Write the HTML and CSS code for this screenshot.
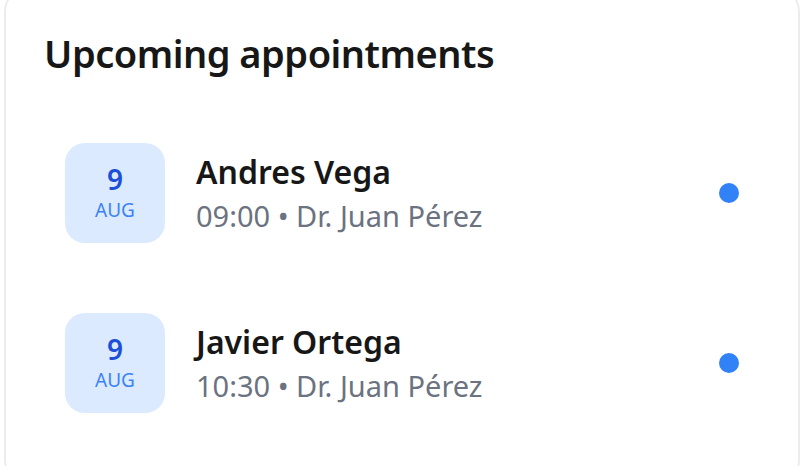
FILE: index.html
```html
<!DOCTYPE html>
<html lang="en">
<head>
    <meta charset="UTF-8">
    <meta name="viewport" content="width=device-width, initial-scale=1.0">
    <title>Upcoming appointments</title>
    <link rel="stylesheet" href="styles.css">
</head>
<body>

    <!-- tarjeta de próximas citas -->
    <div class="card">
        <h2 class="card-title">Upcoming appointments</h2>

        <ul class="appointments">
            <li class="appointment">
                <div class="date-box">
                    <span class="date-day">9</span>
                    <span class="date-month">AUG</span>
                </div>
                <div class="appointment-info">
                    <div class="patient-name">Andres Vega</div>
                    <div class="appointment-meta">09:00 • Dr. Juan Pérez</div>
                </div>
                <span class="status-dot"></span>
            </li>
            <li class="appointment">
                <div class="date-box">
                    <span class="date-day">9</span>
                    <span class="date-month">AUG</span>
                </div>
                <div class="appointment-info">
                    <div class="patient-name">Javier Ortega</div>
                    <div class="appointment-meta">10:30 • Dr. Juan Pérez</div>
                </div>
                <span class="status-dot"></span>
            </li>
        </ul>
    </div>

</body>
</html>
```

FILE: styles.css
```css
body {
    font-family: "Noto Sans", "Open Sans", sans-serif;
    margin: 0;
    padding: 0;
    background-color: #fff;
    overflow: hidden;
}
.card {
    box-sizing: border-box;
    width: 796px;
    height: 500px;
    margin: -14px 0 0 4px;
    padding: 41px 38px 0;
    background-color: #fff;
    border: 2px solid #ececee;
    border-radius: 26px;
}
.card-title {
    margin: 0;
    font-size: 38px;
    font-weight: 600;
    line-height: 48px;
    letter-spacing: -0.5px;
    color: #171717;
}
.appointments {
    list-style-type: none;
    margin: 66px 0 0;
    padding: 0;
    display: flex;
    flex-direction: column;
    gap: 70px;
}
.appointment {
    display: flex;
    align-items: center;
    padding: 0 21px;
}
.date-box {
    width: 100px;
    height: 100px;
    flex-shrink: 0;
    border-radius: 20px;
    background-color: #dbeafe;
    display: flex;
    flex-direction: column;
    align-items: center;
    justify-content: center;
}
.date-day {
    font-size: 28px;
    font-weight: 600;
    line-height: 34px;
    color: #1d4ed8;
}
.date-month {
    font-size: 19px;
    line-height: 28px;
    color: #3b82f6;
}
.appointment-info {
    margin-left: 31px;
}
.patient-name {
    font-size: 32px;
    font-weight: 600;
    line-height: 42px;
    color: #171717;
}
.appointment-meta {
    margin-top: 3px;
    font-size: 29px;
    line-height: 40px;
    color: #6b7280;
}
.status-dot {
    width: 20px;
    height: 20px;
    margin-left: auto;
    border-radius: 50%;
    background-color: #3182f6;
}
```
